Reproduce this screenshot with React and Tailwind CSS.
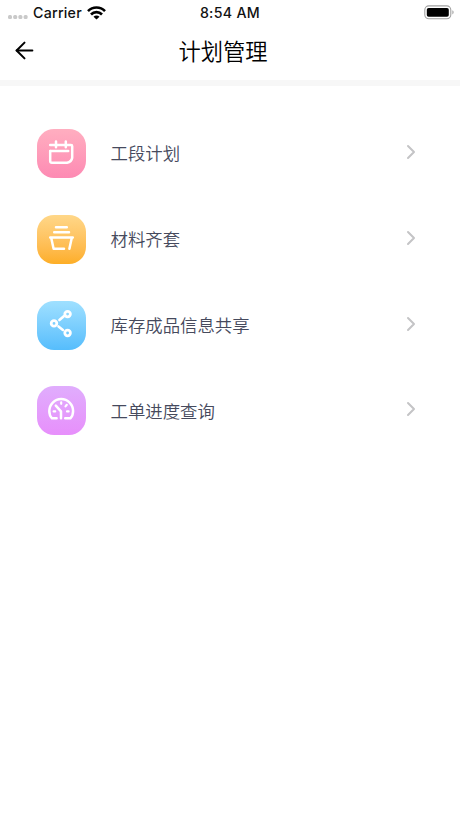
import { ArrowLeft } from 'lucide-react'

const MENU = [
  { title: '工段计划', icon: <CalendarIcon />, tile: 'from-[#ffaec0] to-[#fd8ab3]' },
  { title: '材料齐套', icon: <BasketIcon />, tile: 'from-[#ffd788] to-[#fdae25]' },
  { title: '库存成品信息共享', icon: <ShareIcon />, tile: 'from-[#9fe0ff] to-[#55bdfc]' },
  { title: '工单进度查询', icon: <GaugeIcon />, tile: 'from-[#e0adfd] to-[#e78ffb]' },
]

export default function App() {
  return (
    <div className="h-[818px] w-[460px] overflow-hidden bg-white font-[Inter,'Noto_Sans_CJK_SC',sans-serif]">
      <StatusBar />
      <header className="grid h-[54px] grid-cols-[42px_1fr_56px] items-center">
        <ArrowLeft className="mb-[6px] ml-[11px] size-[27px] text-black" strokeWidth={1.8} />
        <h1 className="mb-[2px] text-center text-[22.3px] leading-[32px] font-[350] text-black">计划管理</h1>
      </header>
      <div className="h-[6px] bg-[#f7f7f7]" />
      <ul className="pt-[24.8px]">
        {MENU.map((item) => (
          <MenuRow key={item.title} {...item} />
        ))}
      </ul>
    </div>
  )
}

function StatusBar() {
  return (
    <div className="grid h-[26px] grid-cols-3 items-center pr-[6px] pl-[7px] text-[14.2px] leading-[20px] font-medium text-[#111]">
      <div className="flex items-center">
        <svg className="mt-[9px] mr-[4px]" width="22" height="5" fill="#c9c9c9">
          <rect x="1" y="0" width="4" height="4" rx="1.5" />
          <rect x="6.2" y="0" width="4" height="4" rx="1.5" />
          <rect x="11.4" y="0" width="4" height="4" rx="1.5" />
          <rect x="16.6" y="0" width="4" height="4" rx="1.5" />
        </svg>
        <span className="tracking-[0.25px]">Carrier</span>
        <svg className="ml-[5px]" width="19" height="14" fill="none" stroke="#000" strokeWidth="2.6">
          <path d="M1 5.1a12 12 0 0 1 17 0" />
          <path d="M4 8.5a7.6 7.6 0 0 1 11 0" />
          <path d="M9.5 13.4 6.5 10.7a4.2 4.2 0 0 1 6 0Z" fill="#000" stroke="none" />
        </svg>
      </div>
      <span className="pr-[1px] text-center tracking-[0.3px]">8:54 AM</span>
      <svg className="mb-[1px] justify-self-end" width="30" height="15" fill="none">
        <rect x="0.8" y="0.9" width="26" height="12.8" rx="4" stroke="#a0a0a0" strokeWidth="1.1" />
        <rect x="2.8" y="2.9" width="22" height="8.8" rx="1.8" fill="#000" />
        <path d="M28.4 5.2v4.2c1.6-.7 1.6-3.5 0-4.2Z" fill="#a0a0a0" />
      </svg>
    </div>
  )
}

function MenuRow({ title, icon, tile }) {
  return (
    <li className="flex h-[85.7px] items-center pr-[43px] pl-[37px]">
      <div className={`size-[49px] rounded-[17px] bg-linear-to-b ${tile}`}>{icon}</div>
      <span className="mt-[1.6px] ml-[24.5px] flex-1 text-[17.4px] leading-[26px] font-[350] text-[#464a5d]">
        {title}
      </span>
      <svg
        className="mb-[3px]"
        width="12"
        height="16"
        fill="none"
        stroke="#c4c4c6"
        strokeWidth="2"
        strokeLinecap="round"
        strokeLinejoin="round"
      >
        <path d="m3 2 6 6-6 6" />
      </svg>
    </li>
  )
}

function TileIcon({ children }) {
  return (
    <svg
      className="size-[49px]"
      viewBox="0 0 49 49"
      fill="none"
      stroke="#fff"
      strokeWidth="2.5"
      strokeLinecap="round"
      strokeLinejoin="round"
    >
      {children}
    </svg>
  )
}

function CalendarIcon() {
  return (
    <TileIcon>
      <path d="M13.2 22v10a1.8 1.8 0 0 0 1.8 1.8h15c3-.6 4.800-2.200 5.200-5V17.200a1.200 1.200 0 0 0-1.200-1.200H13.200" />
      <path d="M13.2 22h18M19 12.6v5.600M28.8 12.6v5.600" />
    </TileIcon>
  )
}

function BasketIcon() {
  return (
    <TileIcon>
      <path d="M19 12.2h10.800M17.2 17.2h14.800" />
      <path d="M27 33.8H16.600L14.200 22.800M13.2 22.600h22.600M34.8 22.800l-2.400 11" />
    </TileIcon>
  )
}

function ShareIcon() {
  return (
    <TileIcon>
      <g strokeWidth="2.8">
        <circle cx="30.6" cy="13.1" r="2.8" />
        <circle cx="17" cy="22.4" r="2.8" />
        <circle cx="30.6" cy="32" r="2.8" />
        <path d="m22.4 19 4.4-3.8M21.5 25.4l4.4 3.500" strokeWidth="2.6" />
      </g>
    </TileIcon>
  )
}

function GaugeIcon() {
  return (
    <TileIcon>
      <path d="M19.6 32.3H15c-1.7-1.6-2.7-4.3-2.7-7.300a11.900 11.900 0 0 1 23.800 0c0 3-1 5.700-2.700 7.300H28.200" />
      <path d="m18.8 19.6 5.200 5.800v6.800" />
      <path d="M16.6 25.4h1.600M30 25.4h1.600M24.2 16.4v1.400M29.8 18.8l-1.300 1.600" strokeWidth="2.2" />
    </TileIcon>
  )
}
